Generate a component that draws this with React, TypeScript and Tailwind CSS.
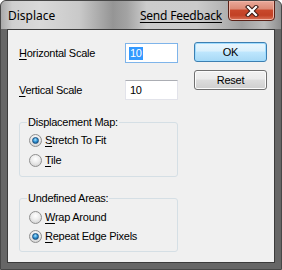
import React from "react";

const font = "font-['Liberation_Sans',Arial,sans-serif] text-[11px] leading-[13px] tracking-[-0.25px] text-black";

function Radio({ checked }: { checked?: boolean }) {
  return (
    <span className="w-[13px] h-[13px] shrink-0 rounded-full border border-[#8f8f8f] bg-[radial-gradient(circle_at_50%_35%,#ffffff_0%,#ececec_45%,#c9c9c9_100%)] flex items-center justify-center">
      {checked && (
        <span className="w-[7px] h-[7px] rounded-full border border-[#1c5180] bg-[radial-gradient(circle_at_45%_35%,#a6e4ff_0%,#2d8fd1_50%,#0f4b7d_100%)]" />
      )}
    </span>
  );
}

function Option({ checked, accel, rest }: { checked?: boolean; accel: string; rest: string }) {
  return (
    <div className="flex items-center gap-[3px] h-[13px]">
      <Radio checked={checked} />
      <span>
        <span className="underline underline-offset-[2px]">{accel}</span>
        {rest}
      </span>
    </div>
  );
}

function Group({ title, children }: { title: string; children: React.ReactNode }) {
  return (
    <div className="relative border border-[#d5dfe5] rounded-[3px] pl-[9px] flex flex-col">
      <span className="absolute -top-[7px] left-[7px] px-[1px] bg-[#f0f0f0]">{title}</span>
      {children}
    </div>
  );
}

function Button({ children, primary }: { children: React.ReactNode; primary?: boolean }) {
  return (
    <div
      className={
        primary
          ? "h-[20px] rounded-[3px] border border-[#3c7fb1] bg-[linear-gradient(#eaf6fd_0%,#d9f0fc_45%,#bee6fd_50%,#a7d9f5_100%)] shadow-[inset_0_0_0_1px_#9fdcff] flex items-center justify-center"
          : "h-[20px] rounded-[3px] border border-[#707070] bg-[linear-gradient(#f2f2f2_0%,#ebebeb_45%,#dddddd_50%,#cfcfcf_100%)] shadow-[inset_0_0_0_1px_#fcfcfc] flex items-center justify-center"
      }
    >
      {children}
    </div>
  );
}

export default function App() {
  return (
    <div className="w-[282px] h-[270px] bg-white">
      <div className="w-[282px] h-[270px] flex flex-col rounded-t-[6px] border border-[#474747] bg-[#666666] overflow-hidden">
        {/* title bar */}
        <div className="h-[28px] shrink-0 flex items-start bg-[linear-gradient(90deg,#a9a9a9_0%,#cfcfcf_4%,#d9d9d9_14%,#c9c9c9_28%,#959595_40%,#a3a3a3_45%,#cccccc_52%,#cbcbcb_70%,#b8b8b8_78%,#a0a0a0_86%,#bbbbbb_94%,#8e8e8e_100%)]">
          <span className="ml-[7px] mt-[7px] font-['Noto_Sans',sans-serif] text-[12px] leading-[16px] text-black">Displace</span>
          <span className="ml-auto mt-[7px] font-['Noto_Sans',sans-serif] text-[12px] leading-[16px] tracking-[-0.2px] text-black underline underline-offset-[2px]">
            Send Feedback
          </span>
          <div className="-mt-px ml-[6px] mr-[6px] w-[47px] h-[21px] rounded-b-[4px] border border-[#5b2016] bg-[linear-gradient(#e9a99a_0%,#dc8b77_40%,#c8472b_50%,#c24125_75%,#d97258_100%)] shadow-[inset_0_0_0_1px_#efb6a8] flex items-center justify-center">
            <svg width="14" height="12" viewBox="0 0 14 12">
              <path d="M3 2 L11 10 M11 2 L3 10" stroke="#3a1a14" strokeWidth="4.2" strokeLinecap="square" />
              <path d="M3 2 L11 10 M11 2 L3 10" stroke="#ffffff" strokeWidth="2.2" strokeLinecap="square" />
            </svg>
          </div>
        </div>

        {/* body frame */}
        <div className="flex-1 px-[6px] pb-[6px]">
          <div className={`h-full border border-[#3b3b3b] bg-[#f0f0f0] flex pl-[11px] pt-[12px] ${font}`}>
            <div className="w-[159px] flex flex-col">
              <div className="flex items-center h-[20px] mt-[1px]">
                <span className="flex-1">
                  <span className="underline underline-offset-[2px]">H</span>orizontal Scale
                </span>
                <div className="w-[53px] h-[20px] border border-[#7eb4ea] bg-white flex items-center pl-[3px]">
                  <span className="bg-[#3399ff] text-white px-px">10</span>
                </div>
              </div>
              <div className="flex items-center h-[20px] mt-[17px]">
                <span className="flex-1">
                  <span className="underline underline-offset-[2px]">V</span>ertical Scale
                </span>
                <div className="w-[53px] h-[20px] border border-[#e2e3ea] border-t-[#abadb3] bg-white flex items-center pl-[4px]">
                  10
                </div>
              </div>
              <div className="mt-[22px] w-[159px] flex flex-col">
                <Group title="Displacement Map:">
                  <div className="pt-[11px] pb-[9px] flex flex-col gap-[7px]">
                    <Option checked accel="S" rest="tretch To Fit" />
                    <Option accel="T" rest="ile" />
                  </div>
                </Group>
              </div>
              <div className="mt-[21px] w-[159px] flex flex-col">
                <Group title="Undefined Areas:">
                  <div className="pt-[12px] pb-[8px] flex flex-col gap-[6px]">
                    <Option accel="W" rest="rap Around" />
                    <Option checked accel="R" rest="epeat Edge Pixels" />
                  </div>
                </Group>
              </div>
            </div>
            <div className="ml-[16px] w-[73px] flex flex-col gap-[8px]">
              <Button primary>OK</Button>
              <Button>Reset</Button>
            </div>
          </div>
        </div>
      </div>
    </div>
  );
}
